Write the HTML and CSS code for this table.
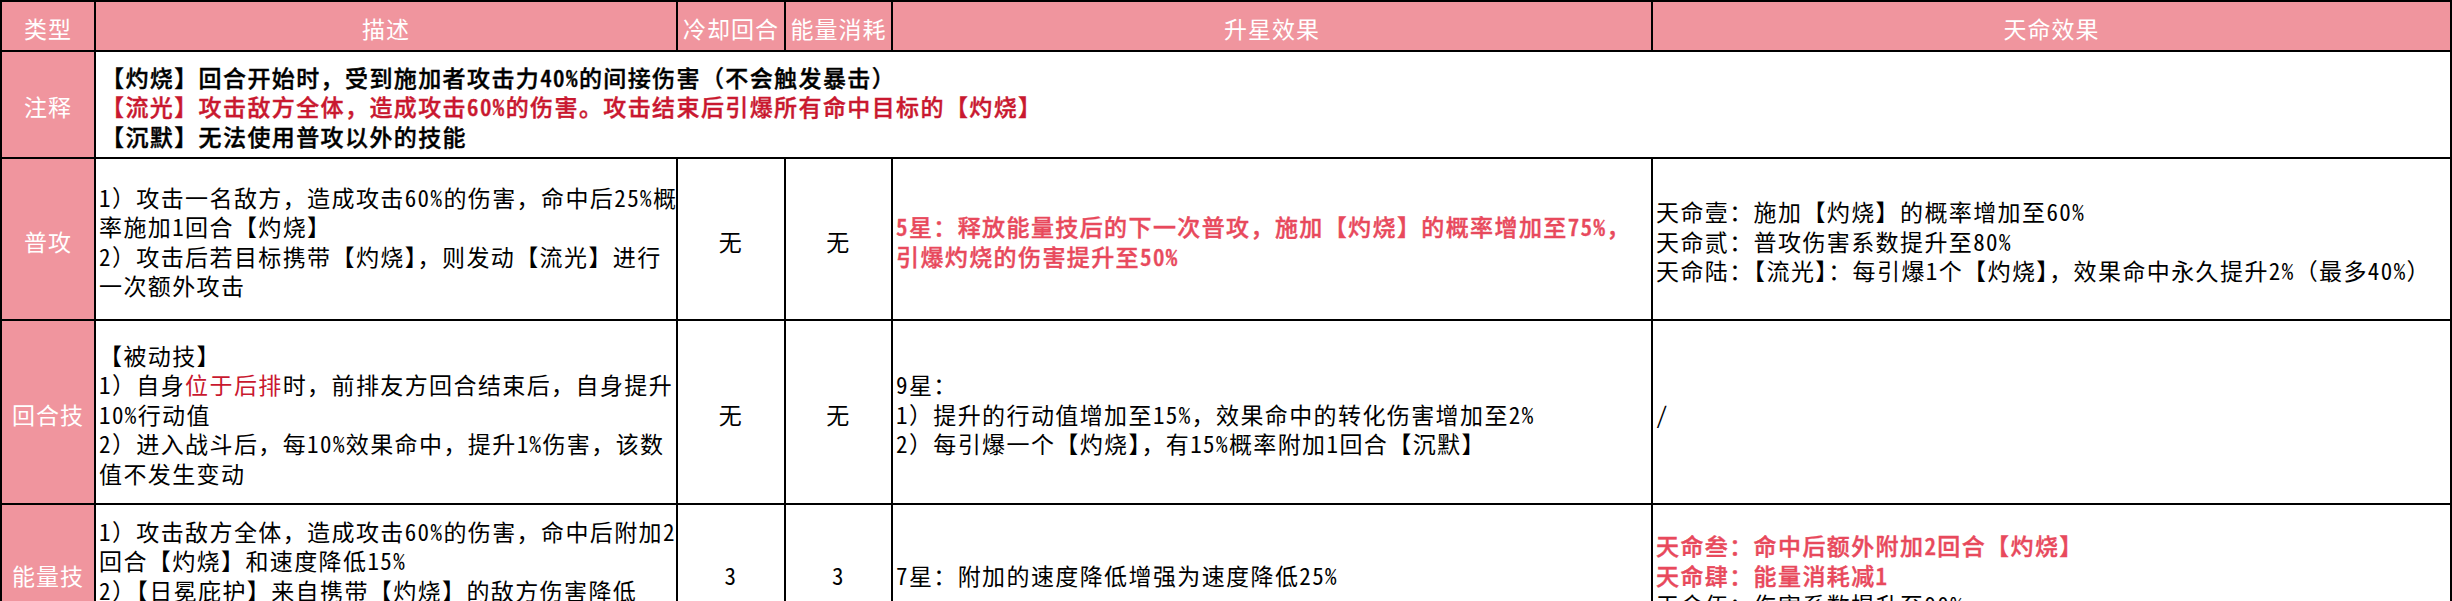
FILE: index.html
```html
<!DOCTYPE html>
<html lang="zh-CN">
<head>
<meta charset="utf-8">
<title>技能表</title>
<link rel="stylesheet" href="styles.css">
</head>
<body>
<div class="sheet">
  <div class="cell head">类型</div>
  <div class="cell head">描述</div>
  <div class="cell head">冷却回合</div>
  <div class="cell head">能量消耗</div>
  <div class="cell head">升星效果</div>
  <div class="cell head">天命效果</div>

  <div class="cell label">注释</div>
  <div class="cell text note strong">
    <div class="ln">【灼烧】回合开始时，受到施加者攻击力<span class="hw">40%</span>的间接伤害（不会触发暴击）</div>
    <div class="ln crimson">【流光】攻击敌方全体，造成攻击<span class="hw">60%</span>的伤害。攻击结束后引爆所有命中目标的【灼烧】</div>
    <div class="ln">【沉默】无法使用普攻以外的技能</div>
  </div>

  <div class="cell label">普攻</div>
  <div class="cell text">
    <div class="ln"><span class="hw">1</span>）攻击一名敌方，造成攻击<span class="hw">60%</span>的伤害，命中后<span class="hw">25%</span>概</div>
    <div class="ln">率施加<span class="hw">1</span>回合【灼烧】</div>
    <div class="ln"><span class="hw">2</span>）攻击后若目标携带【灼烧】，则发动【流光】进行</div>
    <div class="ln">一次额外攻击</div>
  </div>
  <div class="cell mid">无</div>
  <div class="cell mid">无</div>
  <div class="cell text pink strong">
    <div class="ln"><span class="hw">5</span>星：释放能量技后的下一次普攻，施加【灼烧】的概率增加至<span class="hw">75%</span>，</div>
    <div class="ln">引爆灼烧的伤害提升至<span class="hw">50%</span></div>
  </div>
  <div class="cell text">
    <div class="ln">天命壹：施加【灼烧】的概率增加至<span class="hw">60%</span></div>
    <div class="ln">天命贰：普攻伤害系数提升至<span class="hw">80%</span></div>
    <div class="ln">天命陆：【流光】：每引爆<span class="hw">1</span>个【灼烧】，效果命中永久提升<span class="hw">2%</span>（最多<span class="hw">40%</span>）</div>
  </div>

  <div class="cell label">回合技</div>
  <div class="cell text">
    <div class="ln">【被动技】</div>
    <div class="ln"><span class="hw">1</span>）自身<span class="crimson">位于后排</span>时，前排友方回合结束后，自身提升</div>
    <div class="ln"><span class="hw">10%</span>行动值</div>
    <div class="ln"><span class="hw">2</span>）进入战斗后，每<span class="hw">10%</span>效果命中，提升<span class="hw">1%</span>伤害，该数</div>
    <div class="ln">值不发生变动</div>
  </div>
  <div class="cell mid">无</div>
  <div class="cell mid">无</div>
  <div class="cell text">
    <div class="ln"><span class="hw">9</span>星：</div>
    <div class="ln"><span class="hw">1</span>）提升的行动值增加至<span class="hw">15%</span>，效果命中的转化伤害增加至<span class="hw">2%</span></div>
    <div class="ln"><span class="hw">2</span>）每引爆一个【灼烧】，有<span class="hw">15%</span>概率附加<span class="hw">1</span>回合【沉默】</div>
  </div>
  <div class="cell text">
    <div class="ln"><span class="hw">/</span></div>
  </div>

  <div class="cell label">能量技</div>
  <div class="cell text">
    <div class="ln"><span class="hw">1</span>）攻击敌方全体，造成攻击<span class="hw">60%</span>的伤害，命中后附加<span class="hw">2</span></div>
    <div class="ln">回合【灼烧】和速度降低<span class="hw">15%</span></div>
    <div class="ln"><span class="hw">2</span>）【日冕庇护】来自携带【灼烧】的敌方伤害降低</div>
    <div class="ln"><span class="hw">10%</span></div>
  </div>
  <div class="cell mid"><span class="hw">3</span></div>
  <div class="cell mid"><span class="hw">3</span></div>
  <div class="cell text">
    <div class="ln"><span class="hw">7</span>星：附加的速度降低增强为速度降低<span class="hw">25%</span></div>
  </div>
  <div class="cell text">
    <div class="ln pink strong">天命叁：命中后额外附加<span class="hw">2</span>回合【灼烧】</div>
    <div class="ln pink strong">天命肆：能量消耗减<span class="hw">1</span></div>
    <div class="ln">天命伍：伤害系数提升至<span class="hw">90%</span></div>
  </div>
</div>
</body>
</html>
```
FILE: styles.css
```css
html, body {
  margin: 0;
  padding: 0;
  background: #ffffff;
  overflow: hidden;
}

.sheet {
  display: grid;
  grid-template-columns: 92px 580px 106px 105px 758px 797px;
  grid-template-rows: 48px 105px 160px 182px 136px;
  gap: 2px;
  padding: 2px;
  background: #000000;
  width: max-content;
  font-family: "Noto Sans CJK SC", "Noto Sans", sans-serif;
  font-size: 23px;
  letter-spacing: 1.4px;
  line-height: 29.5px;
  color: #000000;
}

.cell {
  display: flex;
  flex-direction: column;
  justify-content: center;
  background: #ffffff;
  padding: 5px 0 0 0;
  box-sizing: border-box;
  overflow: hidden;
}

.head,
.label {
  background: #f0959e;
  color: #ffffff;
  align-items: center;
  text-align: center;
  letter-spacing: 1px;
}

.mid {
  align-items: center;
  text-align: center;
}

.text {
  align-items: flex-start;
  padding-left: 3px;
}

.note {
  grid-column: 2 / 7;
  padding-left: 5px;
}

.ln {
  white-space: nowrap;
}

.strong {
  font-weight: 500;
  -webkit-text-stroke: 0.4px currentColor;
}

.hw {
  font-feature-settings: "hwid" 1;
}

.crimson {
  color: #c9182f;
}

.pink {
  color: #e8495c;
}
```
